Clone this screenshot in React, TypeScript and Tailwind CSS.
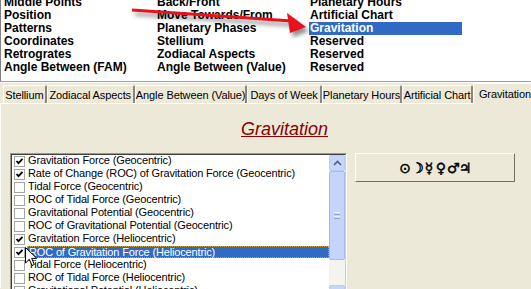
import React from 'react';

const col1 = ['Middle Points', 'Position', 'Patterns', 'Coordinates', 'Retrogrates', 'Angle Between (FAM)'];
const col2 = ['Back/Front', 'Move Towards/From', 'Planetary Phases', 'Stellium', 'Zodiacal Aspects', 'Angle Between (Value)'];
const col3 = ['Planetary Hours', 'Artificial Chart', 'Gravitation', 'Reserved', 'Reserved', 'Reserved'];

const tabs = [
  { label: 'Stellium', w: 'w-[47px]' },
  { label: 'Zodiacal Aspects', w: 'w-[95px]' },
  { label: 'Angle Between (Value)', w: 'w-[120px]' },
  { label: 'Days of Week', w: 'w-[80px]' },
  { label: 'Planetary Hours', w: 'w-[87px]' },
  { label: 'Artificial Chart', w: 'w-[76px]' },
];

const items = [
  { text: 'Gravitation Force (Geocentric)', on: true },
  { text: 'Rate of Change (ROC) of Gravitation Force (Geocentric)', on: true },
  { text: 'Tidal Force (Geocentric)', on: false },
  { text: 'ROC of Tidal Force (Geocentric)', on: false },
  { text: 'Gravitational Potential (Geocentric)', on: false },
  { text: 'ROC of Gravitational Potential (Geocentric)', on: false },
  { text: 'Gravitation Force (Heliocentric)', on: true },
  { text: 'ROC of Gravitation Force (Heliocentric)', on: true, sel: true },
  { text: 'Tidal Force (Heliocentric)', on: false },
  { text: 'ROC of Tidal Force (Heliocentric)', on: false },
  { text: 'Gravitational Potential (Heliocentric)', on: false },
];

const planets = ['⊙', '☽', '☿', '♀', '♂', '♃'];

function Column({ rows, selected }: { rows: string[]; selected?: number }) {
  return (
    <div className="flex flex-col">
      {rows.map((r, i) => (
        <div
          key={i}
          className={
            'h-[13px] leading-[13px] pl-[1px] ' +
            (i === selected ? 'bg-[#316ac5] text-white' : 'text-black')
          }
        >
          {r}
        </div>
      ))}
    </div>
  );
}

function CheckBox({ on }: { on: boolean }) {
  return (
    <span className="mt-[1px] w-[11px] h-[11px] shrink-0 border border-[#a5a5a5] bg-white flex items-center justify-center">
      {on && (
        <svg width="9" height="9" viewBox="0 0 9 9">
          <path d="M1.5 4 L3.5 6.2 L7.5 1.8" fill="none" stroke="#000" strokeWidth="1.8" />
        </svg>
      )}
    </span>
  );
}

function Chevron({ down }: { down?: boolean }) {
  return (
    <svg width="9" height="6" viewBox="0 0 9 6">
      <path d={down ? 'M1 1 L4.5 4.5 L8 1' : 'M1 5 L4.5 1.5 L8 5'} fill="none" stroke="#4d6185" strokeWidth="1.6" />
    </svg>
  );
}

export default function App() {
  return (
    <div
      className="relative w-[531px] h-[289px] overflow-hidden bg-[#ece9d8] text-black"
      style={{ fontFamily: '"Liberation Sans", Arial, sans-serif' }}
    >
      {/* top multi-column list */}
      <div className="h-[82px] bg-white border-l border-l-[#808080] border-b border-b-[#a0a0a0] overflow-hidden">
        <div className="-mt-[4px] pl-[2px] grid grid-cols-[153px_153px_153px] text-[12px] font-bold">
          <Column rows={col1} />
          <Column rows={col2} />
          <Column rows={col3} selected={2} />
        </div>
      </div>

      {/* tab strip */}
      <div className="h-[21px] flex items-end pl-[3px] border-t border-t-white text-[11px] tracking-[-0.1px]">
        {tabs.map((t) => (
          <div
            key={t.label}
            className={
              t.w +
              ' h-[18px] border-t border-l border-white border-r-2 border-r-[#8a877a] rounded-t-[2px] text-center leading-[15px] pt-[2px] whitespace-nowrap'
            }
          >
            {t.label}
          </div>
        ))}
        <div className="relative z-10 -mb-[1px] h-[21px] flex-1 border-t border-l border-white rounded-t-[2px] bg-[#ece9d8] pl-[5px] pt-[3px] leading-[15px] whitespace-nowrap">
          Gravitation
        </div>
      </div>

      {/* panel */}
      <div className="border-t border-l border-white h-[185px]">
        <div className="pt-[14px] pl-[240px]">
          <span className="text-[18px] leading-[20px] italic underline text-[#8b0000]">Gravitation</span>
        </div>

        <div className="mt-[11px] flex items-start">
          {/* checked list box */}
          <div className="ml-[9px] w-[337px] h-[150px] border border-t-[#9d9a8c] border-l-[#9d9a8c] border-r-white border-b-white">
            <div className="h-full border border-t-[#404040] border-l-[#404040] border-r-[#d4d0c8] border-b-[#d4d0c8] bg-white flex">
              <div className="flex-1 overflow-hidden text-[11px] tracking-[-0.15px] pl-[2px]">
                {items.map((it, i) => (
                  <div key={i} className="h-[13px] flex items-start">
                    <CheckBox on={it.on} />
                    <div
                      className={
                        'ml-[2px] h-[12px] flex-1 leading-[11px] pl-[1px] whitespace-nowrap ' +
                        (it.sel
                          ? 'bg-[#316ac5] text-white border border-dotted border-[#c9a43c] pl-0'
                          : '')
                      }
                    >
                      {it.text}
                    </div>
                  </div>
                ))}
              </div>

              {/* scrollbar */}
              <div className="w-[16px] bg-[#f4f3ee] flex flex-col">
                <div className="h-[16px] rounded-[2px] border border-[#b8ccf6] bg-[#c6d6fb] flex items-center justify-center">
                  <Chevron />
                </div>
                <div className="h-[89px] rounded-[2px] border border-[#a6b9e8] bg-[#c4d4fc] flex flex-col items-center justify-center gap-[1px]">
                  <span className="w-[6px] h-[1px] bg-[#eef3ff]" />
                  <span className="w-[6px] h-[1px] bg-[#8ca4dc]" />
                  <span className="w-[6px] h-[1px] bg-[#eef3ff]" />
                  <span className="w-[6px] h-[1px] bg-[#8ca4dc]" />
                </div>
                <div className="flex-1" />
                <div className="h-[16px] rounded-[2px] border border-[#b8ccf6] bg-[#c6d6fb] flex items-center justify-center">
                  <Chevron down />
                </div>
              </div>
            </div>
          </div>

          {/* planets button */}
          <div className="ml-[8px] w-[160px] h-[29px] border border-t-white border-l-white border-r-[#716f64] border-b-[#716f64] flex items-center justify-center">
            <div
              className="flex items-center text-[14px] leading-none text-black [-webkit-text-stroke:0.5px_black]"
              style={{ fontFamily: '"DejaVu Sans", sans-serif' }}
            >
              {planets.map((p, i) => (
                <span key={i} className="w-[12px] text-center">
                  {p}
                </span>
              ))}
            </div>
          </div>
        </div>
      </div>

      {/* red annotation arrow */}
      <svg
        className="absolute left-0 top-0 pointer-events-none drop-shadow-[3px_4px_2px_rgba(0,0,0,0.45)]"
        width="531"
        height="60"
        viewBox="0 0 531 60"
      >
        <path d="M132 10 L292 21" stroke="#e8121c" strokeWidth="3" />
        <path d="M287 13 L306 27 L290 33 Z" fill="#e8121c" />
      </svg>

      {/* mouse cursor */}
      <svg className="absolute left-[25px] top-[247px]" width="13" height="21" viewBox="0 0 13 21">
        <path d="M0.5 0.5 L0.5 16 L4.3 12.3 L7 18.5 L9.3 17.5 L6.7 11.4 L11.8 11.4 Z" fill="#fff" stroke="#000" strokeWidth="1" />
      </svg>
    </div>
  );
}
